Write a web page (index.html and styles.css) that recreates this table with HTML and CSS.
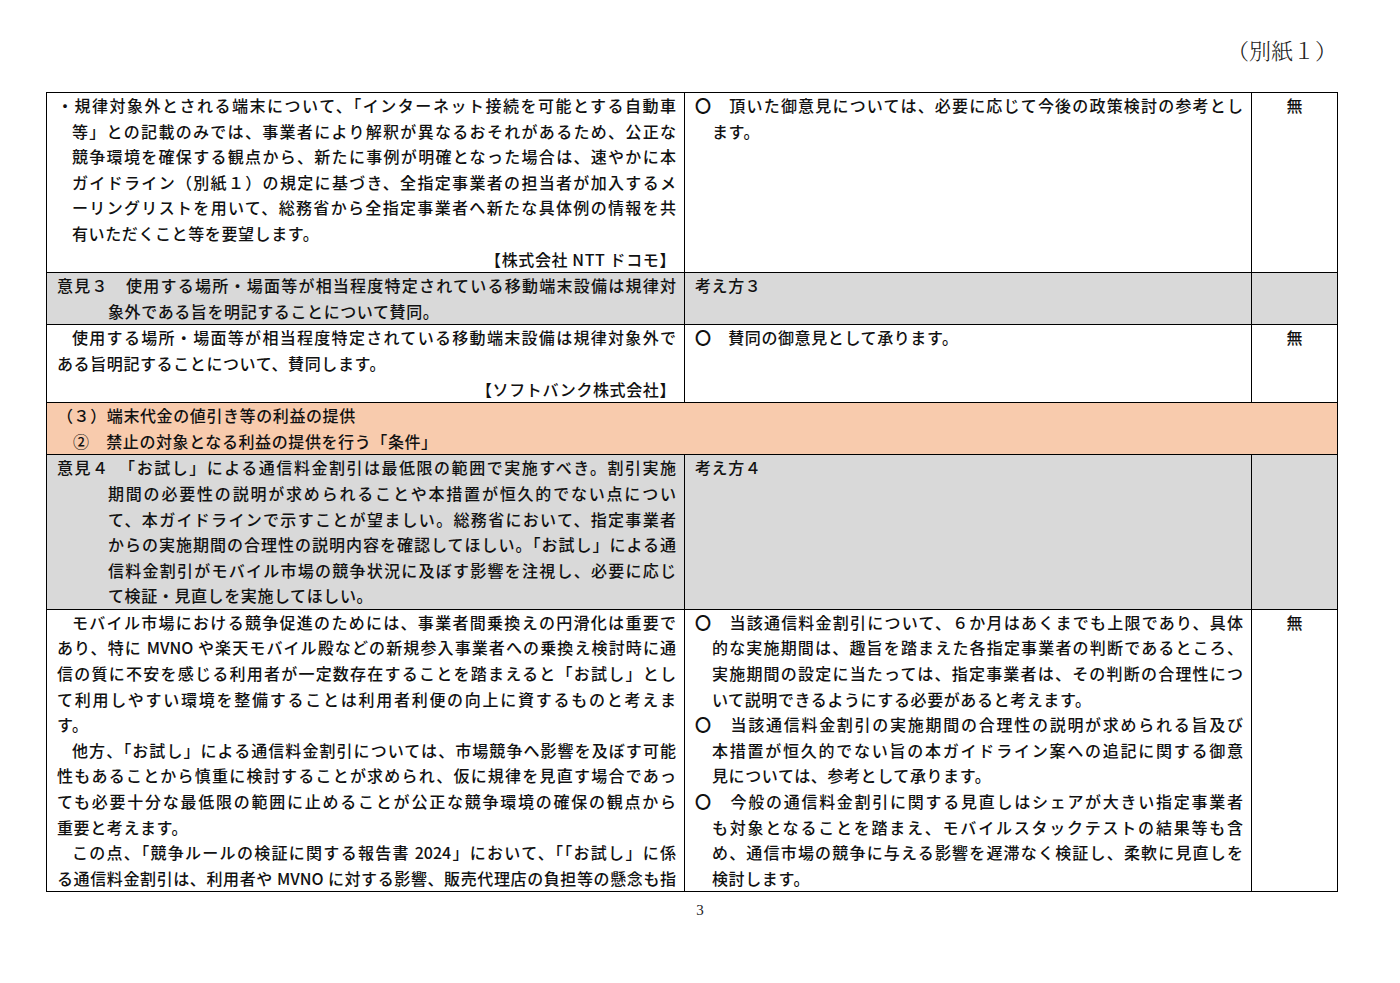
FILE: index.html
```html
<!DOCTYPE html>
<html lang="ja">
<head>
<meta charset="utf-8">
<title>別紙１</title>
<link rel="stylesheet" href="styles.css">
</head>
<body>
<div class="page">
  <div class="annex">（別紙１）</div>
  <table class="sheet">
    <colgroup>
      <col class="c-opinion">
      <col class="c-answer">
      <col class="c-change">
    </colgroup>
    <tbody>
      <tr>
        <td>
          <div class="hang1">
            <div class="j">・規律対象外とされる端末について、「インターネット接続を可能とする自動車</div>
            <div class="j">等」との記載のみでは、事業者により解釈が異なるおそれがあるため、公正な</div>
            <div class="j">競争環境を確保する観点から、新たに事例が明確となった場合は、速やかに本</div>
            <div class="j">ガイドライン（別紙１）の規定に基づき、全指定事業者の担当者が加入するメ</div>
            <div class="j">ーリングリストを用いて、総務省から全指定事業者へ新たな具体例の情報を共</div>
            <div class="ln">有いただくこと等を要望します。</div>
          </div>
          <div class="who">【株式会社 NTT ドコモ】</div>
        </td>
        <td>
          <div class="bullet">
            <div class="j"><span class="maru">〇</span>　頂いた御意見については、必要に応じて今後の政策検討の参考とし</div>
            <div class="ln">ます。</div>
          </div>
        </td>
        <td class="mark">無</td>
      </tr>
      <tr class="gray">
        <td>
          <div class="hang3">
            <div class="j">意見３　使用する場所・場面等が相当程度特定されている移動端末設備は規律対</div>
            <div class="ln">象外である旨を明記することについて賛同。</div>
          </div>
        </td>
        <td><div class="ln">考え方３</div></td>
        <td></td>
      </tr>
      <tr>
        <td>
          <div class="para">
            <div class="j first">使用する場所・場面等が相当程度特定されている移動端末設備は規律対象外で</div>
            <div class="ln">ある旨明記することについて、賛同します。</div>
          </div>
          <div class="who">【ソフトバンク株式会社】</div>
        </td>
        <td><div class="ln"><span class="maru">〇</span>　賛同の御意見として承ります。</div></td>
        <td class="mark">無</td>
      </tr>
      <tr class="section">
        <td colspan="3">
          <div class="ln">（３）端末代金の値引き等の利益の提供</div>
          <div class="ln sub">②　禁止の対象となる利益の提供を行う「条件」</div>
        </td>
      </tr>
      <tr class="gray">
        <td>
          <div class="hang3">
            <div class="j">意見４　「お試し」による通信料金割引は最低限の範囲で実施すべき。割引実施</div>
            <div class="j">期間の必要性の説明が求められることや本措置が恒久的でない点につい</div>
            <div class="j">て、本ガイドラインで示すことが望ましい。総務省において、指定事業者</div>
            <div class="j">からの実施期間の合理性の説明内容を確認してほしい。「お試し」による通</div>
            <div class="j">信料金割引がモバイル市場の競争状況に及ぼす影響を注視し、必要に応じ</div>
            <div class="ln">て検証・見直しを実施してほしい。</div>
          </div>
        </td>
        <td><div class="ln">考え方４</div></td>
        <td></td>
      </tr>
      <tr>
        <td>
          <div class="para">
            <div class="j first">モバイル市場における競争促進のためには、事業者間乗換えの円滑化は重要で</div>
            <div class="j">あり、特に MVNO や楽天モバイル殿などの新規参入事業者への乗換え検討時に通</div>
            <div class="j">信の質に不安を感じる利用者が一定数存在することを踏まえると「お試し」とし</div>
            <div class="j">て利用しやすい環境を整備することは利用者利便の向上に資するものと考えま</div>
            <div class="ln">す。</div>
          </div>
          <div class="para">
            <div class="j first">他方、「お試し」による通信料金割引については、市場競争へ影響を及ぼす可能</div>
            <div class="j">性もあることから慎重に検討することが求められ、仮に規律を見直す場合であっ</div>
            <div class="j">ても必要十分な最低限の範囲に止めることが公正な競争環境の確保の観点から</div>
            <div class="ln">重要と考えます。</div>
          </div>
          <div class="para">
            <div class="j first">この点、「競争ルールの検証に関する報告書 2024」において、「「お試し」に係</div>
            <div class="j">る通信料金割引は、利用者や MVNO に対する影響、販売代理店の負担等の懸念も指</div>
          </div>
        </td>
        <td>
          <div class="bullet">
            <div class="j"><span class="maru">〇</span>　当該通信料金割引について、６か月はあくまでも上限であり、具体</div>
            <div class="j">的な実施期間は、趣旨を踏まえた各指定事業者の判断であるところ、</div>
            <div class="j">実施期間の設定に当たっては、指定事業者は、その判断の合理性につ</div>
            <div class="ln">いて説明できるようにする必要があると考えます。</div>
          </div>
          <div class="bullet">
            <div class="j"><span class="maru">〇</span>　当該通信料金割引の実施期間の合理性の説明が求められる旨及び</div>
            <div class="j">本措置が恒久的でない旨の本ガイドライン案への追記に関する御意</div>
            <div class="ln">見については、参考として承ります。</div>
          </div>
          <div class="bullet">
            <div class="j"><span class="maru">〇</span>　今般の通信料金割引に関する見直しはシェアが大きい指定事業者</div>
            <div class="j">も対象となることを踏まえ、モバイルスタックテストの結果等も含</div>
            <div class="j">め、通信市場の競争に与える影響を遅滞なく検証し、柔軟に見直しを</div>
            <div class="ln">検討します。</div>
          </div>
        </td>
        <td class="mark">無</td>
      </tr>
    </tbody>
  </table>
  <div class="folio">3</div>
</div>
</body>
</html>
```

FILE: styles.css
```css
html, body {
  margin: 0;
  padding: 0;
  background: #fff;
}

body {
  font-family: "Noto Sans CJK JP", "Noto Sans", sans-serif;
  color: #111;
}

.page {
  width: 1400px;
  padding-top: 34px;
}

.annex {
  font-family: "Noto Serif CJK JP", "Noto Sans CJK JP", serif;
  font-size: 22px;
  line-height: 32px;
  font-weight: 300;
  text-align: right;
  padding-right: 63px;
  color: #222;
}

.sheet {
  margin: 26px 0 0 46px;
  width: 1291px;
  table-layout: fixed;
  border-collapse: collapse;
  font-size: 16px;
  line-height: 25.6px;
  font-weight: 500;
}

.c-opinion { width: 638px; }
.c-answer { width: 567px; }
.c-change { width: 86px; }

.sheet td {
  border: 1px solid #000;
  padding: 0 8px 0 10px;
  vertical-align: top;
}

.gray td { background: #d9d9d9; }
.section td { background: #f8cbad; }

.ln {
  letter-spacing: 0.6px;
  white-space: nowrap;
}

.j {
  text-align: justify;
  text-align-last: justify;
  letter-spacing: 0;
}

.maru {
  font-weight: 700;
}

.hang1 { padding-left: 15px; }
.hang1 > .j:first-child { margin-left: -15px; }

.bullet { padding-left: 17px; }
.bullet > :first-child { margin-left: -17px; }

.hang3 { padding-left: 51px; }
.hang3 > :first-child { margin-left: -51px; }

.para > .first { padding-left: 15px; }

.sub { padding-left: 16px; }

.who {
  text-align: right;
  letter-spacing: 0.6px;
}

.sheet td.mark {
  text-align: center;
  padding: 0;
}

.folio {
  font-family: "Liberation Serif", serif;
  font-size: 15px;
  line-height: 20px;
  text-align: center;
  margin-top: 8px;
  color: #222;
}
```
